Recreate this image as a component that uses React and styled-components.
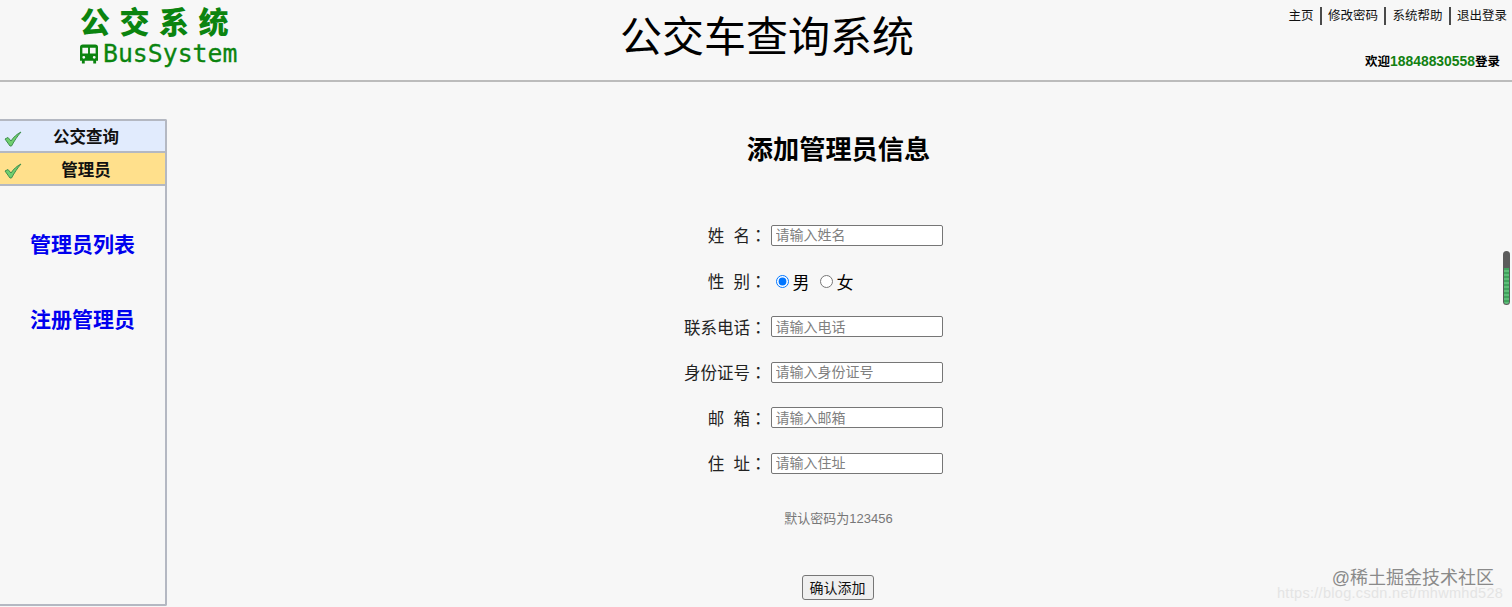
import React from "react";
import styled, { createGlobalStyle } from "styled-components";

const CJK = `"Liberation Sans", "Noto Sans CJK SC", sans-serif`;

const Global = createGlobalStyle`
  html, body { margin: 0; padding: 0; background: #f7f7f7; }
  body { font-family: ${CJK}; color: #000; overflow: hidden; }
  * { box-sizing: border-box; }
`;

const Page = styled.div`
  position: relative;
  width: 1512px;
  height: 607px;
  overflow: hidden;
  display: flex;
  flex-direction: column;
`;

const Header = styled.header`
  height: 82px;
  flex: none;
  border-bottom: 2px solid #bcbcbc;
  display: flex;
  align-items: flex-start;
`;

const Logo = styled.div`
  width: 238px;
  padding: 5px 0 0 80px;
  color: #0b840f;
  flex: none;
`;

const LogoCn = styled.div`
  font-size: 30px;
  line-height: 36px;
  font-weight: 900;
  letter-spacing: 9.5px;
  white-space: nowrap;
`;

const LogoEn = styled.div`
  display: flex;
  align-items: center;
  gap: 5px;
  font-family: "DejaVu Sans Mono", monospace;
  font-size: 24.8px;
  line-height: 26px;
  -webkit-text-stroke: 0.3px #0b840f;
  white-space: nowrap;
`;

const SiteTitle = styled.h1`
  flex: none;
  width: 1058px;
  margin: 9px 0 0;
  text-align: center;
  font-size: 42px;
  line-height: 58px;
  font-weight: 400;
`;

const HeaderRight = styled.div`
  flex: 1;
  min-width: 0;
  display: flex;
  flex-direction: column;
  align-items: flex-end;
`;

const TopNav = styled.nav`
  display: flex;
  margin-top: 7px;
  white-space: nowrap;
`;

const NavLink = styled.a`
  font-size: 12.5px;
  line-height: 18px;
  color: #111;
  padding: 0 6.5px 0 6px;
  border-left: ${(p) => (p.$first ? "none" : "2px solid #4a4a4a")};
  &:last-child { padding-right: 5px; }
`;

const Welcome = styled.div`
  margin-top: 27px;
  padding-right: 12px;
  font-size: 12.5px;
  line-height: 18px;
  font-weight: 700;
  white-space: nowrap;
`;

const Phone = styled.span`
  color: #118011;
  font-size: 13.9px;
`;

const Body = styled.div`
  flex: 1;
  display: flex;
  min-height: 0;
`;

const Sidebar = styled.aside`
  width: 167px;
  flex: none;
  margin-top: 37px;
  margin-bottom: 1px;
  border: 2px solid #b4b8c2;
  border-left: none;
  border-radius: 0 2px 2px 0;
`;

const MenuHead = styled.div`
  position: relative;
  height: ${(p) => (p.$active ? "33px" : "32px")};
  background: ${(p) => (p.$active ? "#ffe08c" : "#e1ebfd")};
  border-bottom: 2px solid #b4b8c2;
  display: flex;
  align-items: center;
  justify-content: center;
  padding-left: 7px;
  font-size: 16.5px;
  font-weight: 700;
  color: #111;
`;

const Tick = styled.svg`
  position: absolute;
  left: 4px;
  top: 9px;
`;

const SideLinks = styled.div`
  display: flex;
  flex-direction: column;
  gap: 45px;
  padding: 44px 0 0 30px;
`;

const SideLink = styled.a`
  font-size: 21px;
  line-height: 30px;
  font-weight: 700;
  color: #0000ee;
`;

const Main = styled.main`
  flex: 1;
  display: flex;
  flex-direction: column;
  align-items: center;
  padding: 50px 2px 0 0;
`;

const FormTitle = styled.h2`
  margin: 0 0 56px;
  font-size: 26.2px;
  line-height: 36px;
  font-weight: 700;
`;

const Form = styled.form`
  display: flex;
  flex-direction: column;
  align-items: flex-start;
  width: 340px;
  padding-left: 2px;
`;

const Row = styled.div`
  display: flex;
  align-items: center;
  height: 22px;
  margin-bottom: ${(p) => p.$gap || "23.5px"};
`;

const Label = styled.label`
  width: 100px;
  padding-right: 4px;
  text-align: right;
  font-size: 16.5px;
  color: #222;
  white-space: pre;
`;

const Colon = styled.span`
  font-family: "Noto Sans CJK TC", sans-serif;
`;

const TextInput = styled.input`
  width: 172px;
  height: 21px;
  border: 1px solid #767676;
  border-radius: 2px;
  background: #fff;
  padding: 1px 4px;
  font-family: ${CJK};
  font-size: 14px;
  &::placeholder { color: #808080; }
`;

const Radio = styled.input`
  width: 13px;
  height: 13px;
  margin: 0 3px 0 ${(p) => p.$left};
`;

const RadioText = styled.span`
  font-size: 17px;
  margin-left: 1px;
`;

const Hint = styled.div`
  width: 340px;
  margin: 12px 0 0 -2px;
  text-align: center;
  font-size: 13px;
  line-height: 18px;
  color: #777;
`;

const Submit = styled.button`
  margin: 47px 2px 0 0;
  width: 72px;
  height: 25px;
  padding: 0;
  border: 1px solid #767676;
  border-radius: 3px;
  background: #efefef;
  font-family: ${CJK};
  font-size: 14px;
  color: #111;
`;

const Scroll = styled.div`
  position: absolute;
  left: 1503px;
  top: 251px;
  width: 7px;
  height: 54px;
  border-radius: 4px;
  overflow: hidden;
  background: #5c5c5c;
`;

const ScrollFill = styled.div`
  position: absolute;
  left: 1px;
  right: 1px;
  top: 17px;
  bottom: 1px;
  border-radius: 0 0 3px 3px;
  background: repeating-linear-gradient(#3fa45c 0 2px, #5ebd79 2px 4px);
`;

const Watermark = styled.div`
  position: absolute;
  right: 18px;
  top: 569px;
  font-size: 18px;
  line-height: 18px;
  color: #8a8a8a;
  white-space: nowrap;
`;

const WatermarkUrl = styled.div`
  position: absolute;
  left: 1277px;
  top: 587px;
  font-size: 14.5px;
  line-height: 12px;
  letter-spacing: 0.3px;
  color: #e4e4e4;
  white-space: nowrap;
`;

function CheckMark() {
  return (
    <Tick width="18" height="18" viewBox="0 0 18 18">
      <path d="M1 9 L4 7.5 L7 11 C9.5 7 13 4 17 2 C13.5 6 10.5 10.5 7.5 16 L6 16 Z" fill="#6fcf6f" stroke="#3f8f4f" strokeWidth="1" strokeLinejoin="round" />
    </Tick>
  );
}

function BusIcon() {
  return (
    <svg width="18" height="20" viewBox="0 0 19 20" fill="#0b840f">
      <path fillRule="evenodd" d="M3 0h13a3 3 0 0 1 3 3v14h-2v3h-3v-3H5v3H2v-3H0V3a3 3 0 0 1 3-3zM2.500 3.500v6h6v-6zM10.500 3.500v6h6v-6zM4 12a1.500 1.500 0 1 0 0 3 1.500 1.500 0 0 0 0-3zM15 12a1.500 1.500 0 1 0 0 3 1.500 1.500 0 0 0 0-3z" />
    </svg>
  );
}

const fields = [
  { label: "姓  名", placeholder: "请输入姓名" },
  { label: "联系电话", placeholder: "请输入电话" },
  { label: "身份证号", placeholder: "请输入身份证号" },
  { label: "邮  箱", placeholder: "请输入邮箱" },
  { label: "住  址", placeholder: "请输入住址" },
];

export default function App() {
  return (
    <Page>
      <Global />
      <Header>
        <Logo>
          <LogoCn>公交系统</LogoCn>
          <LogoEn><BusIcon />BusSystem</LogoEn>
        </Logo>
        <SiteTitle>公交车查询系统</SiteTitle>
        <HeaderRight>
          <TopNav>
            <NavLink $first>主页</NavLink>
            <NavLink>修改密码</NavLink>
            <NavLink>系统帮助</NavLink>
            <NavLink>退出登录</NavLink>
          </TopNav>
          <Welcome>欢迎<Phone>18848830558</Phone>登录</Welcome>
        </HeaderRight>
      </Header>
      <Body>
        <Sidebar>
          <MenuHead><CheckMark />公交查询</MenuHead>
          <MenuHead $active><CheckMark />管理员</MenuHead>
          <SideLinks>
            <SideLink>管理员列表</SideLink>
            <SideLink>注册管理员</SideLink>
          </SideLinks>
        </Sidebar>
        <Main>
          <FormTitle>添加管理员信息</FormTitle>
          <Form onSubmit={(e) => e.preventDefault()}>
            <Row $gap="24px">
              <Label>{fields[0].label}<Colon>：</Colon></Label>
              <TextInput placeholder={fields[0].placeholder} />
            </Row>
            <Row>
              <Label>性  别<Colon>：</Colon></Label>
              <Radio type="radio" name="sex" $left="5px" defaultChecked />
              <RadioText>男</RadioText>
              <Radio type="radio" name="sex" $left="10px" />
              <RadioText>女</RadioText>
            </Row>
            {fields.slice(1).map((f) => (
              <Row key={f.label}>
                <Label>{f.label}<Colon>：</Colon></Label>
                <TextInput placeholder={f.placeholder} />
              </Row>
            ))}
            <Hint>默认密码为123456</Hint>
          </Form>
          <Submit type="button">确认添加</Submit>
        </Main>
      </Body>
      <Scroll><ScrollFill /></Scroll>
      <WatermarkUrl>https://blog.csdn.net/mhwmhd528</WatermarkUrl>
      <Watermark>@稀土掘金技术社区</Watermark>
    </Page>
  );
}
